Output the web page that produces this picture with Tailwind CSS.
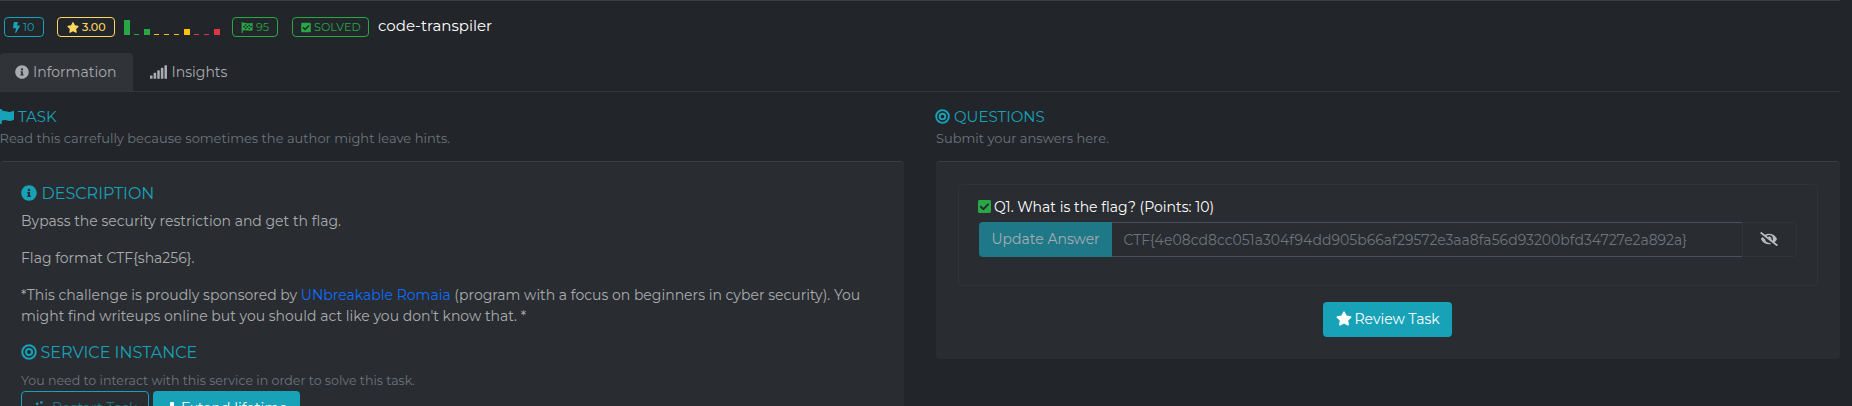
<!DOCTYPE html>
<html lang="en">
<head>
<meta charset="utf-8">
<title>code-transpiler</title>
<script src="https://cdn.jsdelivr.net/npm/@tailwindcss/browser@4"></script>
</head>
<body class="h-[406px] overflow-hidden bg-[#22252a] font-['Montserrat','Inter',sans-serif] text-sm text-[#a9acaf]">
<svg class="hidden">
  <symbol id="bolt" viewBox="0 0 320 512"><path d="M296 160H180.6l42.6-129.8C227.2 15 215.7 0 200 0H56C44 0 33.8 8.9 32.2 20.8l-32 240C-1.7 275.2 9.5 288 24 288h118.7L96.6 482.5c-3.6 15.2 8 29.5 23.3 29.5 8.4 0 16.4-4.4 20.8-12l176-304c9.3-15.9-2.2-36-20.7-36z"/></symbol>
  <symbol id="star" viewBox="0 0 576 512"><path d="M259.3 17.8L194 150.2 47.9 171.5c-26.2 3.8-36.7 36.1-17.7 54.6l105.7 103-25 145.5c-4.5 26.3 23.2 46 46.4 33.7L288 439.6l130.7 68.7c23.2 12.2 50.9-7.4 46.4-33.7l-25-145.5 105.7-103c19-18.5 8.5-50.8-17.7-54.6L382 150.2 316.7 17.8c-11.7-23.6-45.6-23.9-57.4 0z"/></symbol>
  <symbol id="info" viewBox="0 0 512 512"><path d="M256 8C119.043 8 8 119.083 8 256c0 136.997 111.043 248 248 248s248-111.003 248-248C504 119.083 392.957 8 256 8zm0 110c23.196 0 42 18.804 42 42s-18.804 42-42 42-42-18.804-42-42 18.804-42 42-42zm56 254c0 6.627-5.373 12-12 12h-88c-6.627 0-12-5.373-12-12v-24c0-6.627 5.373-12 12-12h12v-64h-12c-6.627 0-12-5.373-12-12v-24c0-6.627 5.373-12 12-12h64c6.627 0 12 5.373 12 12v100h12c6.627 0 12 5.373 12 12v24z"/></symbol>
  <symbol id="signal" viewBox="0 0 640 512"><path d="M16 384h64a16 16 0 0 1 16 16v96a16 16 0 0 1-16 16H16a16 16 0 0 1-16-16v-96a16 16 0 0 1 16-16zM152 288h64a16 16 0 0 1 16 16v192a16 16 0 0 1-16 16h-64a16 16 0 0 1-16-16V304a16 16 0 0 1 16-16zM288 192h64a16 16 0 0 1 16 16v288a16 16 0 0 1-16 16h-64a16 16 0 0 1-16-16V208a16 16 0 0 1 16-16zM424 96h64a16 16 0 0 1 16 16v384a16 16 0 0 1-16 16h-64a16 16 0 0 1-16-16V112a16 16 0 0 1 16-16zM560 0h64a16 16 0 0 1 16 16v480a16 16 0 0 1-16 16h-64a16 16 0 0 1-16-16V16a16 16 0 0 1 16-16z"/></symbol>
  <symbol id="check" viewBox="0 0 448 512"><path d="M400 480H48c-26.51 0-48-21.49-48-48V80c0-26.51 21.49-48 48-48h352c26.51 0 48 21.49 48 48v352c0 26.51-21.49 48-48 48zm-204.686-98.059l184-184c6.248-6.248 6.248-16.379 0-22.627l-22.627-22.627c-6.248-6.248-16.379-6.249-22.628 0L184 302.745l-70.059-70.059c-6.248-6.248-16.379-6.248-22.628 0l-22.627 22.627c-6.248 6.248-6.248 16.379 0 22.627l104 104c6.249 6.249 16.379 6.249 22.628.001z"/></symbol>
  <symbol id="bullseye" viewBox="0 0 496 512"><g fill="none" stroke="currentColor" stroke-width="64"><circle cx="248" cy="256" r="216"/><circle cx="248" cy="256" r="96"/></g></symbol>
  <symbol id="flag" viewBox="0 0 512 512"><path d="M349.565 98.783C295.978 98.783 251.721 64 184.348 64c-24.955 0-47.309 4.384-68.045 12.013a55.947 55.947 0 0 0 3.586-23.562C118.117 24.015 94.806 1.206 66.338.048 34.345-1.254 8 24.296 8 56c0 19.026 9.497 35.825 24 45.945V488c0 13.255 10.745 24 24 24h16c13.255 0 24-10.745 24-24v-94.4c28.311-12.064 63.582-22.122 114.435-22.122 53.588 0 97.844 34.783 165.217 34.783 48.169 0 86.667-16.294 122.505-40.858C506.84 359.452 512 349.571 512 339.045v-243.1c0-23.393-24.269-38.87-45.485-29.016-34.338 15.948-76.454 31.854-116.95 31.854z"/></symbol>
  <symbol id="eye" viewBox="0 0 640 512"><path d="M320 400c-75.85 0-137.25-58.71-142.9-133.11L72.2 185.82c-13.79 17.3-26.48 35.59-36.72 55.59a32.35 32.35 0 0 0 0 29.19C89.71 376.41 197.07 448 320 448c26.91 0 52.87-4 77.89-10.46L346 397.39a144.13 144.13 0 0 1-26 2.61zm313.82 58.1l-110.55-85.44a331.25 331.25 0 0 0 81.25-102.07 32.35 32.35 0 0 0 0-29.19C550.29 135.59 442.93 64 320 64a308.15 308.15 0 0 0-147.32 37.7L45.46 3.37A16 16 0 0 0 23 6.18L3.37 31.45A16 16 0 0 0 6.18 53.9l588.36 454.73a16 16 0 0 0 22.46-2.81l19.64-25.27a16 16 0 0 0-2.82-22.45zm-183.72-142l-39.3-30.38A94.75 94.75 0 0 0 416 256a94.76 94.76 0 0 0-121.31-92.21A47.65 47.65 0 0 1 304 192a46.64 46.64 0 0 1-1.54 10l-73.61-56.89A142.31 142.31 0 0 1 320 112a143.92 143.92 0 0 1 144 144c0 21.63-5.29 41.79-13.9 60.11z"/></symbol>
</svg>

<div class="w-[1840px] border-t border-[#3a3d42]">
  <!-- Task header -->
  <header class="flex h-[52px] items-start pl-1 pt-4 text-[11.2px] leading-[18px]">
    <span class="flex h-5 w-10 items-center rounded border border-[#17a2b8] pl-2 text-[#17a2b8]"><svg class="mr-[3px] h-[11px] w-[7px] fill-current"><use href="#bolt"/></svg>10</span>
    <span class="ml-[13px] flex h-5 w-[58px] items-center rounded border border-[#ffd75e] pl-[9px] font-medium text-[#ffd75e]"><svg class="mr-[3px] h-[11px] w-[12px] shrink-0 fill-current"><use href="#star"/></svg>3.00</span>
    <span class="ml-[9px] mt-[3px] flex h-[15px] w-[96px] items-end gap-1">
      <i class="h-[15px] w-1.5 shrink-0 bg-[#28a745]"></i><i class="h-px w-[5px] mr-px shrink-0 bg-[#28a745]"></i><i class="h-1.5 w-1.5 shrink-0 bg-[#28a745]"></i>
      <i class="h-px w-[5px] mr-px shrink-0 bg-[#ffc107]"></i><i class="h-px w-[5px] mr-px shrink-0 bg-[#ffc107]"></i><i class="h-px w-[5px] mr-px shrink-0 bg-[#ffc107]"></i><i class="h-1.5 w-1.5 shrink-0 bg-[#ffc107]"></i>
      <i class="h-px w-[5px] mr-px shrink-0 bg-[#dc3545]"></i><i class="h-px w-[5px] mr-px shrink-0 bg-[#dc3545]"></i><i class="h-1.5 w-1.5 shrink-0 bg-[#dc3545]"></i>
    </span>
    <span class="ml-3 flex h-5 w-[46px] items-center rounded border border-[#28a745] pl-2 text-[#28a745]"><svg class="mr-[3px] h-[11px] w-[12px] fill-current" viewBox="0 0 12 11"><path fill-rule="evenodd" d="M.6 0h1.2v1C4 .4 6 2.2 11.6.8v7.500C8 10 5 7.200 1.800 8.800V11H.6zM3.800 2.200h1.500v1.500H3.800zM7.500 2.700h1.500v1.500H7.500zM2.300 3.900h1.500v1.500H2.300zM5.600 4h1.500v1.500H5.600zM9.300 4h1.500v1.500H9.300zM3.900 5.800h1.500v1.300H3.900zM7.500 6h1.500v1.300H7.500z"/></svg>95</span>
    <span class="ml-[14px] flex h-5 w-[77px] items-center rounded border border-[#28a745] pl-2 text-[#28a745]"><svg class="mr-[3px] h-[11px] w-[10px] fill-current"><use href="#check"/></svg>SOLVED</span>
    <h1 class="-mt-[2px] ml-[9px] text-[15px] leading-[22px] text-white">code-transpiler</h1>
  </header>

  <!-- Tabs -->
  <nav class="flex h-[39px] border-b border-[#33363a] leading-[21px]">
    <a class="flex w-[133px] items-start rounded-t bg-[#303338] pl-[15px] pt-[9px]"><svg class="mr-1 mt-[3px] h-[14px] w-[14px] fill-current"><use href="#info"/></svg>Information</a>
    <a class="flex items-start pl-[17px] pt-[9px]"><svg class="mr-[4.5px] mt-[3px] h-[14px] w-[17px] fill-current"><use href="#signal"/></svg>Insights</a>
  </nav>

  <main class="flex items-start gap-8 pt-[15px]">
    <section class="w-[904px]">
      <h2 class="flex h-[22px] items-start pt-px text-[15px] leading-[18px] text-[#17a2b8]"><svg class="-ml-px mr-1 mt-px h-[15px] w-[15px] fill-current"><use href="#flag"/></svg>TASK</h2>
      <p class="-ml-[.5px] h-8 text-[13px] leading-[19.5px] text-[#6c757d]">Read this carrefully because sometimes the author might leave hints.</p>
      <div class="h-[260px] rounded border-t border-[#3b3e43] bg-[#292c31] pl-[21px] pt-[22px]">
        <h3 class="mb-2 flex h-[19px] text-base leading-[19px] text-[#17a2b8]"><svg class="mr-[4.5px] mt-px h-4 w-4 fill-current"><use href="#info"/></svg>DESCRIPTION</h3>
        <p class="mb-4 leading-[21px]">Bypass the security restriction and get th flag.</p>
        <p class="mb-4 leading-[21px]">Flag format CTF{sha256}.</p>
        <p class="mb-4 leading-[21px]">*This challenge is proudly sponsored by <a class="text-[#0d6efd]">UNbreakable Romaia</a> (program with a focus on beginners in cyber security). You<br>might find writeups online but you should act like you don't know that. *</p>
        <h3 class="mb-2 flex h-[19px] text-base leading-[19px] text-[#17a2b8]"><svg class="mr-[3.5px] mt-px h-4 w-4 fill-current"><use href="#bullseye"/></svg>SERVICE INSTANCE</h3>
        <p class="text-[12.6px] leading-[21px] text-[#6c757d]">You need to interact with this service in order to solve this task.</p>
        <div class="flex gap-1 leading-[21px]">
          <span class="flex h-[35px] w-[128px] items-start rounded border border-[#17a2b8] pl-[13px] pt-[6px] text-[#1e7785]"><svg class="mr-[3px] mt-[3px] h-[14px] w-[14px] fill-[#17a2b8]" viewBox="0 0 14 14"><circle cx="2.200" cy="2.800" r="1.300"/><circle cx="6.400" cy="1.500" r="1.300"/><circle cx="2" cy="9" r="1.300"/></svg>Restart Task</span>
          <span class="flex h-[35px] w-[147px] items-start rounded bg-[#17a2b8] pl-[13px] pt-[7px] text-white"><svg class="mr-[3px] mt-[3px] h-[14px] w-[12px] fill-current" viewBox="0 0 12 14"><path d="M5 1h2.200q.8 0 .8.800V6h4v3H8v4H4V9H0V6h4V1.800Q4 1 5 1z"/></svg>Extend lifetime</span>
        </div>
      </div>
    </section>

    <section class="w-[904px]">
      <h2 class="flex h-[22px] items-start pt-px text-[15px] leading-[18px] text-[#17a2b8]"><svg class="-ml-px mr-1 mt-px h-[15px] w-[15px] fill-current"><use href="#bullseye"/></svg>QUESTIONS</h2>
      <p class="h-8 text-[13px] leading-[19.5px] text-[#6c757d]">Submit your answers here.</p>
      <div class="h-[198px] rounded border-t border-[#3b3e43] bg-[#292c31] px-[22px] pt-[22px]">
        <div class="h-[102px] rounded border border-[#303338] px-5 pt-3">
          <p class="flex h-[25px] leading-[21px] text-white"><svg class="-ml-px mr-[3px] mt-[2px] h-[15px] w-[13px] fill-[#28a745]"><use href="#check"/></svg>Q1. What is the flag? (Points: 10)</p>
          <div class="flex h-[35px]">
            <span class="w-[133px] rounded-l bg-[#1e7888] pl-[12.5px] pt-[7px] leading-[21px] text-[#a9acaf]">Update Answer</span>
            <span class="flex-1 border-y border-[#4b5056] pl-[11.5px] pt-[7px] leading-[21px] text-[#6c757d]">CTF{4e08cd8cc051a304f94dd905b66af29572e3aa8fa56d93200bfd34727e2a892a}</span>
            <span class="flex w-[55px] items-center justify-center rounded-r border border-[#303338] pr-0.5"><svg class="-mt-px h-[14px] w-[18px] fill-[#b9bcbf]"><use href="#eye"/></svg></span>
          </div>
        </div>
        <div class="flex justify-center pr-0.5 pt-4">
          <span class="flex h-[35px] w-[129px] rounded bg-[#17a2b8] pl-[13px] pt-[7px] leading-[21px] text-white"><svg class="mr-[3px] mt-[2px] h-[15px] w-4 fill-current"><use href="#star"/></svg>Review Task</span>
        </div>
      </div>
    </section>
  </main>
</div>
</body>
</html>
